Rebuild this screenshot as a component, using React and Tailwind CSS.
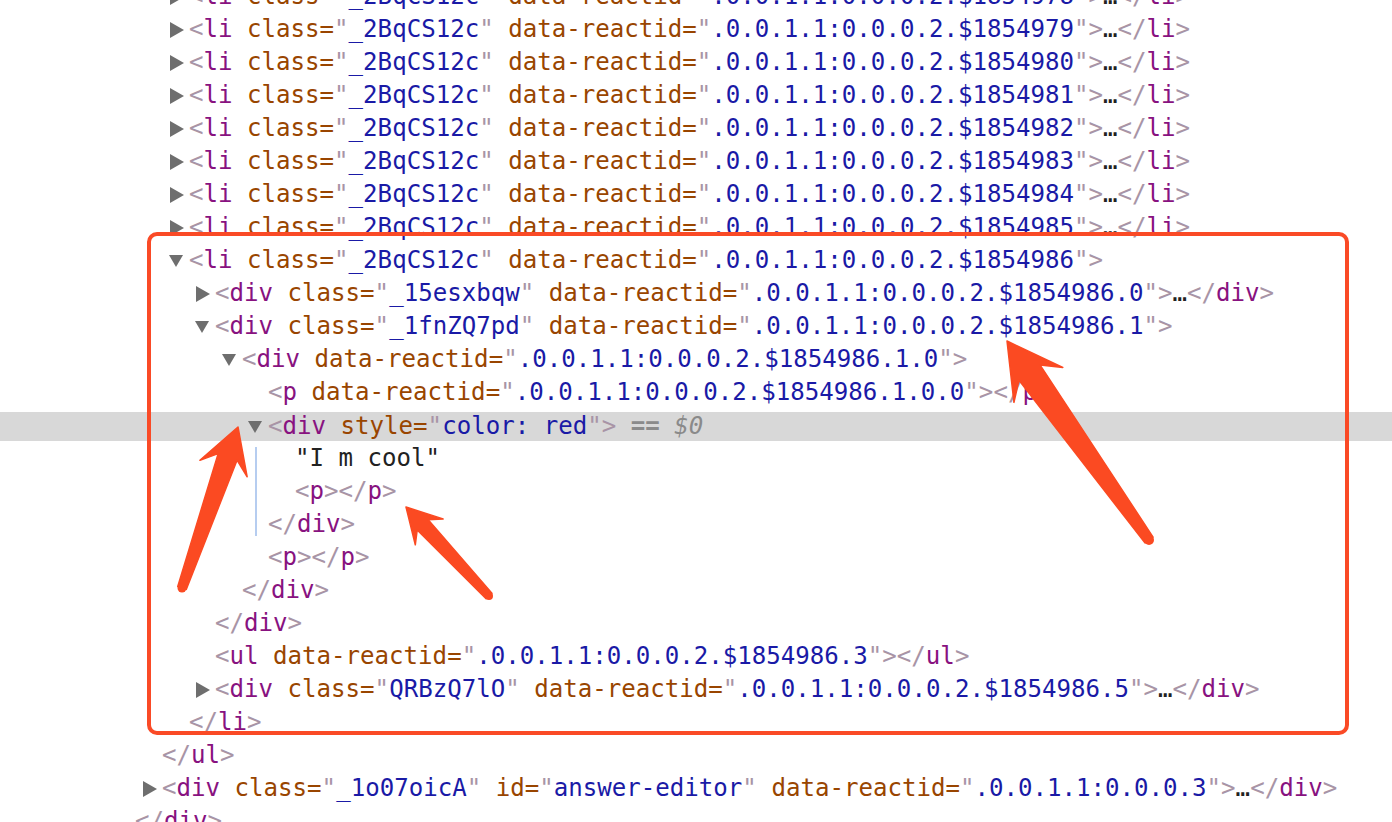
import React from 'react';

const C = {
  br: 'text-[#a894a6]',
  tag: 'text-[#881280]',
  an: 'text-[#994500]',
  av: 'text-[#1a1aa6]',
  tx: 'text-[#222222]',
};

const Tri = ({ open }) => (
  <span className="w-[20px] h-[20px] flex-none flex items-center">
    <svg width="20" height="20" viewBox="0 0 20 20">
      {open ? (
        <polygon points="0,4 14,4 7,16" fill="#6e6e6e" />
      ) : (
        <polygon points="1,2 15,10 1,18" fill="#6e6e6e" />
      )}
    </svg>
  </span>
);

const Close = ({ name }) => (
  <>
    <span className={C.br}>&lt;/</span>
    <span className={C.tag}>{name}</span>
    <span className={C.br}>&gt;</span>
  </>
);

const Open = ({ name, attrs = [], end }) => (
  <>
    <span className={C.br}>&lt;</span>
    <span className={C.tag}>{name}</span>
    {attrs.map(([k, v]) => (
      <React.Fragment key={k}>
        {' '}
        <span className={C.an}>{k}=</span>
        <span className={C.br}>"</span>
        <span className={C.av}>{v}</span>
        <span className={C.br}>"</span>
      </React.Fragment>
    ))}
    <span className={C.br}>&gt;</span>
    {end === 'more' && <span className={C.tx}>…</span>}
    {end && <Close name={name} />}
  </>
);

const Row = ({ pad, tri, hl, children }) => (
  <div className={`h-[33px] ${hl ? 'pt-[3px] pb-[1px]' : ''}`}>
    <div className={`h-full flex items-center whitespace-pre ${pad} ${hl ? 'bg-[#d8d8d8]' : ''}`}>
      {tri && <Tri open={tri === 'open'} />}
      <span>{children}</span>
    </div>
  </div>
);

const rid = (s) => ['data-reactid', '.0.0.1.1:0.0.0.2.$' + s];

// tapered, hand-drawn style arrow
const arrow = (tail, tip, headLen, headW, neck, tailW) => {
  const dx = tip[0] - tail[0];
  const dy = tip[1] - tail[1];
  const len = Math.hypot(dx, dy);
  const ux = dx / len;
  const uy = dy / len;
  const nx = -uy;
  const ny = ux;
  const bx = tip[0] - ux * headLen;
  const by = tip[1] - uy * headLen;
  const kx = tip[0] - ux * headLen * 0.72;
  const ky = tip[1] - uy * headLen * 0.72;
  const pts = [
    [tip[0], tip[1]],
    [bx + nx * headW, by + ny * headW],
    [kx + nx * neck, ky + ny * neck],
    [tail[0] + nx * tailW, tail[1] + ny * tailW],
    [tail[0] - nx * tailW, tail[1] - ny * tailW],
    [kx - nx * neck, ky - ny * neck],
    [bx - nx * headW, by - ny * headW],
  ];
  return pts.map((p) => p.join(',')).join(' ');
};

const arrows = [
  { tail: [182, 588], tip: [238, 427], h: 44, w: 25, n: 10, t: 4.5 },
  { tail: [489, 596], tip: [406, 507], h: 34, w: 19, n: 7.5, t: 4 },
  { tail: [1149, 540], tip: [1007, 341], h: 54, w: 30, n: 13, t: 5 },
];

export default function App() {
  const items = [1854978, 1854979, 1854980, 1854981, 1854982, 1854983, 1854984, 1854985];

  return (
    <div className="relative w-[1392px] h-[822px] overflow-hidden bg-white font-['DejaVu_Sans_Mono',monospace] text-[24.1px] leading-[33px]">
      <div className="-mt-[20px]">
        {items.map((id) => (
          <Row key={id} pad="pl-[169px]" tri="closed">
            <Open name="li" attrs={[['class', '_2BqCS12c'], rid(id)]} end="more" />
          </Row>
        ))}
        <Row pad="pl-[169px]" tri="open">
          <Open name="li" attrs={[['class', '_2BqCS12c'], rid('1854986')]} />
        </Row>
        <Row pad="pl-[195px]" tri="closed">
          <Open name="div" attrs={[['class', '_15esxbqw'], rid('1854986.0')]} end="more" />
        </Row>
        <Row pad="pl-[195px]" tri="open">
          <Open name="div" attrs={[['class', '_1fnZQ7pd'], rid('1854986.1')]} />
        </Row>
        <Row pad="pl-[222px]" tri="open">
          <Open name="div" attrs={[rid('1854986.1.0')]} />
        </Row>
        <Row pad="pl-[268px]">
          <Open name="p" attrs={[rid('1854986.1.0.0')]} end="empty" />
        </Row>
        <Row pad="pl-[248px]" tri="open" hl>
          <Open name="div" attrs={[['style', 'color: red']]} />
          <span className="text-[#8a8a8a] font-bold"> == </span>
          <span className="text-[#8a8a8a] italic">$0</span>
        </Row>
        <div className="flex">
          <div className="ml-[255px] w-[2px] my-[5px] bg-[#b6cdf0]" />
          <div className="flex-1">
            <Row pad="pl-[38px]">
              <span className={C.tx}>"I m cool"</span>
            </Row>
            <Row pad="pl-[38px]">
              <Open name="p" end="empty" />
            </Row>
            <Row pad="pl-[11px]">
              <Close name="div" />
            </Row>
          </div>
        </div>
        <Row pad="pl-[268px]">
          <Open name="p" end="empty" />
        </Row>
        <Row pad="pl-[242px]">
          <Close name="div" />
        </Row>
        <Row pad="pl-[215px]">
          <Close name="div" />
        </Row>
        <Row pad="pl-[215px]">
          <Open name="ul" attrs={[rid('1854986.3')]} end="empty" />
        </Row>
        <Row pad="pl-[195px]" tri="closed">
          <Open name="div" attrs={[['class', 'QRBzQ7lO'], rid('1854986.5')]} end="more" />
        </Row>
        <Row pad="pl-[189px]">
          <Close name="li" />
        </Row>
        <Row pad="pl-[162px]">
          <Close name="ul" />
        </Row>
        <Row pad="pl-[142px]" tri="closed">
          <Open
            name="div"
            attrs={[['class', '_1o07oicA'], ['id', 'answer-editor'], ['data-reactid', '.0.0.1.1:0.0.0.3']]}
            end="more"
          />
        </Row>
        <Row pad="pl-[135px]">
          <Close name="div" />
        </Row>
      </div>

      {/* annotation box */}
      <div className="absolute left-[147px] top-[232px] w-[1202px] h-[503px] border-[4px] border-[#fa4a26] rounded-[10px] pointer-events-none" />

      {/* annotation arrows */}
      <svg className="absolute left-0 top-0 pointer-events-none" width="1392" height="822">
        {arrows.map((a, i) => (
          <g key={i} fill="#fb4a22">
            <polygon points={arrow(a.tail, a.tip, a.h, a.w, a.n, a.t)} strokeLinejoin="round" stroke="#fb4a22" strokeWidth="1.5" />
            <circle cx={a.tail[0]} cy={a.tail[1]} r={a.t} />
          </g>
        ))}
      </svg>
    </div>
  );
}
